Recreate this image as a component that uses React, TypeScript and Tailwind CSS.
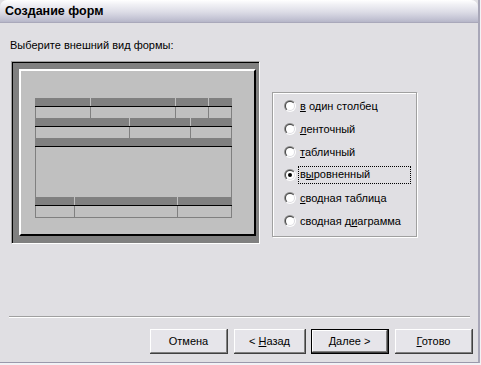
import React from "react";

const FONT = { fontFamily: '"Liberation Sans", Arial, sans-serif' };

function Radio({ checked, idx }: { checked?: boolean; idx: number }) {
  return (
    <svg width="12" height="12" viewBox="0 0 12 12" className="shrink-0">
      <defs>
        <linearGradient id={`o${idx}`} x1="0" y1="0" x2="1" y2="1">
          <stop offset="0" stopColor="#808080" />
          <stop offset="0.5" stopColor="#9a9a9a" />
          <stop offset="0.55" stopColor="#ffffff" />
          <stop offset="1" stopColor="#ffffff" />
        </linearGradient>
        <linearGradient id={`i${idx}`} x1="0" y1="0" x2="1" y2="1">
          <stop offset="0" stopColor="#404040" />
          <stop offset="0.5" stopColor="#505050" />
          <stop offset="0.55" stopColor="#dcdbe0" />
          <stop offset="1" stopColor="#dcdbe0" />
        </linearGradient>
      </defs>
      <circle cx="6" cy="6" r="6" fill={`url(#o${idx})`} />
      <circle cx="6" cy="6" r="5" fill={`url(#i${idx})`} />
      <circle cx="6" cy="6" r="4" fill="#ffffff" />
      {checked && <circle cx="6" cy="6" r="2" fill="#000000" />}
    </svg>
  );
}

function TRow({ segs, bodyH = 11, bottom = false }: { segs: number[]; bodyH?: number; bottom?: boolean }) {
  const items: React.ReactNode[] = [];
  segs.forEach((w, i) => {
    if (i > 0) {
      items.push(
        <div key={`d${i}`} className="flex w-px flex-col">
          <div className="h-[8px] bg-[#c0c0c0]" />
          <div className="h-px bg-black" />
          <div className="bg-[#808080]" style={{ height: bodyH }} />
        </div>
      );
    }
    items.push(
      <div key={`c${i}`} className="flex flex-col" style={{ width: w }}>
        <div className="h-[8px] bg-[#808080]" />
        <div className="h-px bg-black" />
        <div
          className={
            "bg-[#c0c0c0] border-[#808080] " +
            (i === 0 ? "border-l " : "") +
            (i === segs.length - 1 ? "border-r " : "")
          }
          style={{ height: bodyH }}
        />
      </div>
    );
  });
  return <div className={"flex " + (bottom ? "border-b border-[#808080]" : "")}>{items}</div>;
}

function Btn({ children, w, def }: { children: React.ReactNode; w: number; def?: boolean }) {
  return (
    <div className={"h-[25px] " + (def ? "border border-black" : "")} style={{ width: w }}>
      <div className="flex h-full w-full border-b border-r border-[#404040]">
        <div className="flex h-full w-full items-center justify-center border border-l-white border-t-white border-b-[#808080] border-r-[#808080] bg-[#e6e5ea] text-[11px] text-black">
          <span className="whitespace-pre">{children}</span>
        </div>
      </div>
    </div>
  );
}

const U = ({ c }: { c: string }) => <span className="underline">{c}</span>;

export default function App() {
  const options: { label: React.ReactNode; checked?: boolean }[] = [
    { label: (<><U c="в" />{" один столбец"}</>) },
    { label: (<><U c="л" />енточный</>) },
    { label: (<><U c="т" />абличный</>) },
    { label: (<>в<U c="ы" />ровненный</>), checked: true },
    { label: (<><U c="с" />водная таблица</>) },
    { label: (<>сводная д<U c="и" />аграмма</>) },
  ];

  return (
    <div className="h-[365px] w-[481px] overflow-hidden bg-[#f2f2f5]" style={FONT}>
      <div className="flex h-[363px] w-[480px] flex-col border-b border-r-2 border-b-[#9a99ab] border-r-[#a8a7b8] bg-[#e0dfe3]">
        {/* Title bar */}
        <div className="flex h-[23px] shrink-0 items-center rounded-t-[7px] border-b border-[#a9a8ba] bg-[linear-gradient(to_bottom,#ffffff_0%,#f1f1f5_20%,#dcdce6_55%,#c4c4d4_85%,#b6b6c8_100%)] pl-[5px]">
          <span className="text-[12.5px] font-bold leading-none text-black">Создание форм</span>
        </div>

        {/* Body */}
        <div className="flex flex-1 flex-col">
          <div className="mt-[15px] h-[14px] pl-[10px] text-[11px] leading-[14px] text-black">
            Выберите внешний вид формы:
          </div>

          <div className="mt-[9px] flex items-start pl-[11px]">
            {/* Picture frame */}
            <div className="h-[183px] w-[249px] border border-l-[#a0a0a0] border-t-[#a0a0a0] border-b-white border-r-white">
              <div className="h-full w-full border-l border-t border-black bg-[#808080] pb-[7px] pl-[6px] pr-[3px] pt-[6px]">
                <div className="h-full w-full border-2 border-l-white border-t-white border-b-black border-r-black bg-[#c0c0c0] pl-[14px] pt-[27px]">
                  <div className="flex w-[197px] flex-col">
                    <TRow segs={[55, 84, 32, 23]} />
                    <TRow segs={[94, 60, 41]} />
                    <TRow segs={[197]} bodyH={50} />
                    <TRow segs={[39, 102, 54]} bottom />
                  </div>
                </div>
              </div>
            </div>

            {/* Radio group */}
            <div className="ml-[12px] mt-[31px] h-[145px] w-[145px] border border-[#a0a0a0] pt-[1px] shadow-[inset_1px_1px_0_#ffffff,1px_1px_0_#ffffff]">
              {options.map((o, i) => (
                <div key={i} className="flex h-[23px] items-center pl-[11px]">
                  <Radio checked={o.checked} idx={i} />
                  {o.checked ? (
                    <div className="ml-[2px] flex h-[18px] w-[113px] items-center border border-dotted border-black pl-[1px] text-[11px] text-black">
                      <span>{o.label}</span>
                    </div>
                  ) : (
                    <div className="ml-[4px] text-[11px] leading-[14px] text-black">{o.label}</div>
                  )}
                </div>
              ))}
            </div>
          </div>

          {/* Separator */}
          <div className="ml-[9px] mt-[72px] w-[461px]">
            <div className="h-px bg-[#a0a0a0]" />
            <div className="h-px bg-white" />
          </div>

          {/* Buttons */}
          <div className="mt-[11px] flex pl-[150px]">
            <Btn w={78}>Отмена</Btn>
            <div className="ml-[6px]">
              <Btn w={72}>
                <>
                  {"< "}
                  <U c="Н" />
                  азад
                </>
              </Btn>
            </div>
            <div className="ml-[5px]">
              <Btn w={78} def>
                <>
                  <U c="Д" />
                  {"алее >"}
                </>
              </Btn>
            </div>
            <div className="ml-[6px]">
              <Btn w={78}>
                <>
                  <U c="Г" />
                  отово
                </>
              </Btn>
            </div>
          </div>
        </div>
      </div>
    </div>
  );
}
